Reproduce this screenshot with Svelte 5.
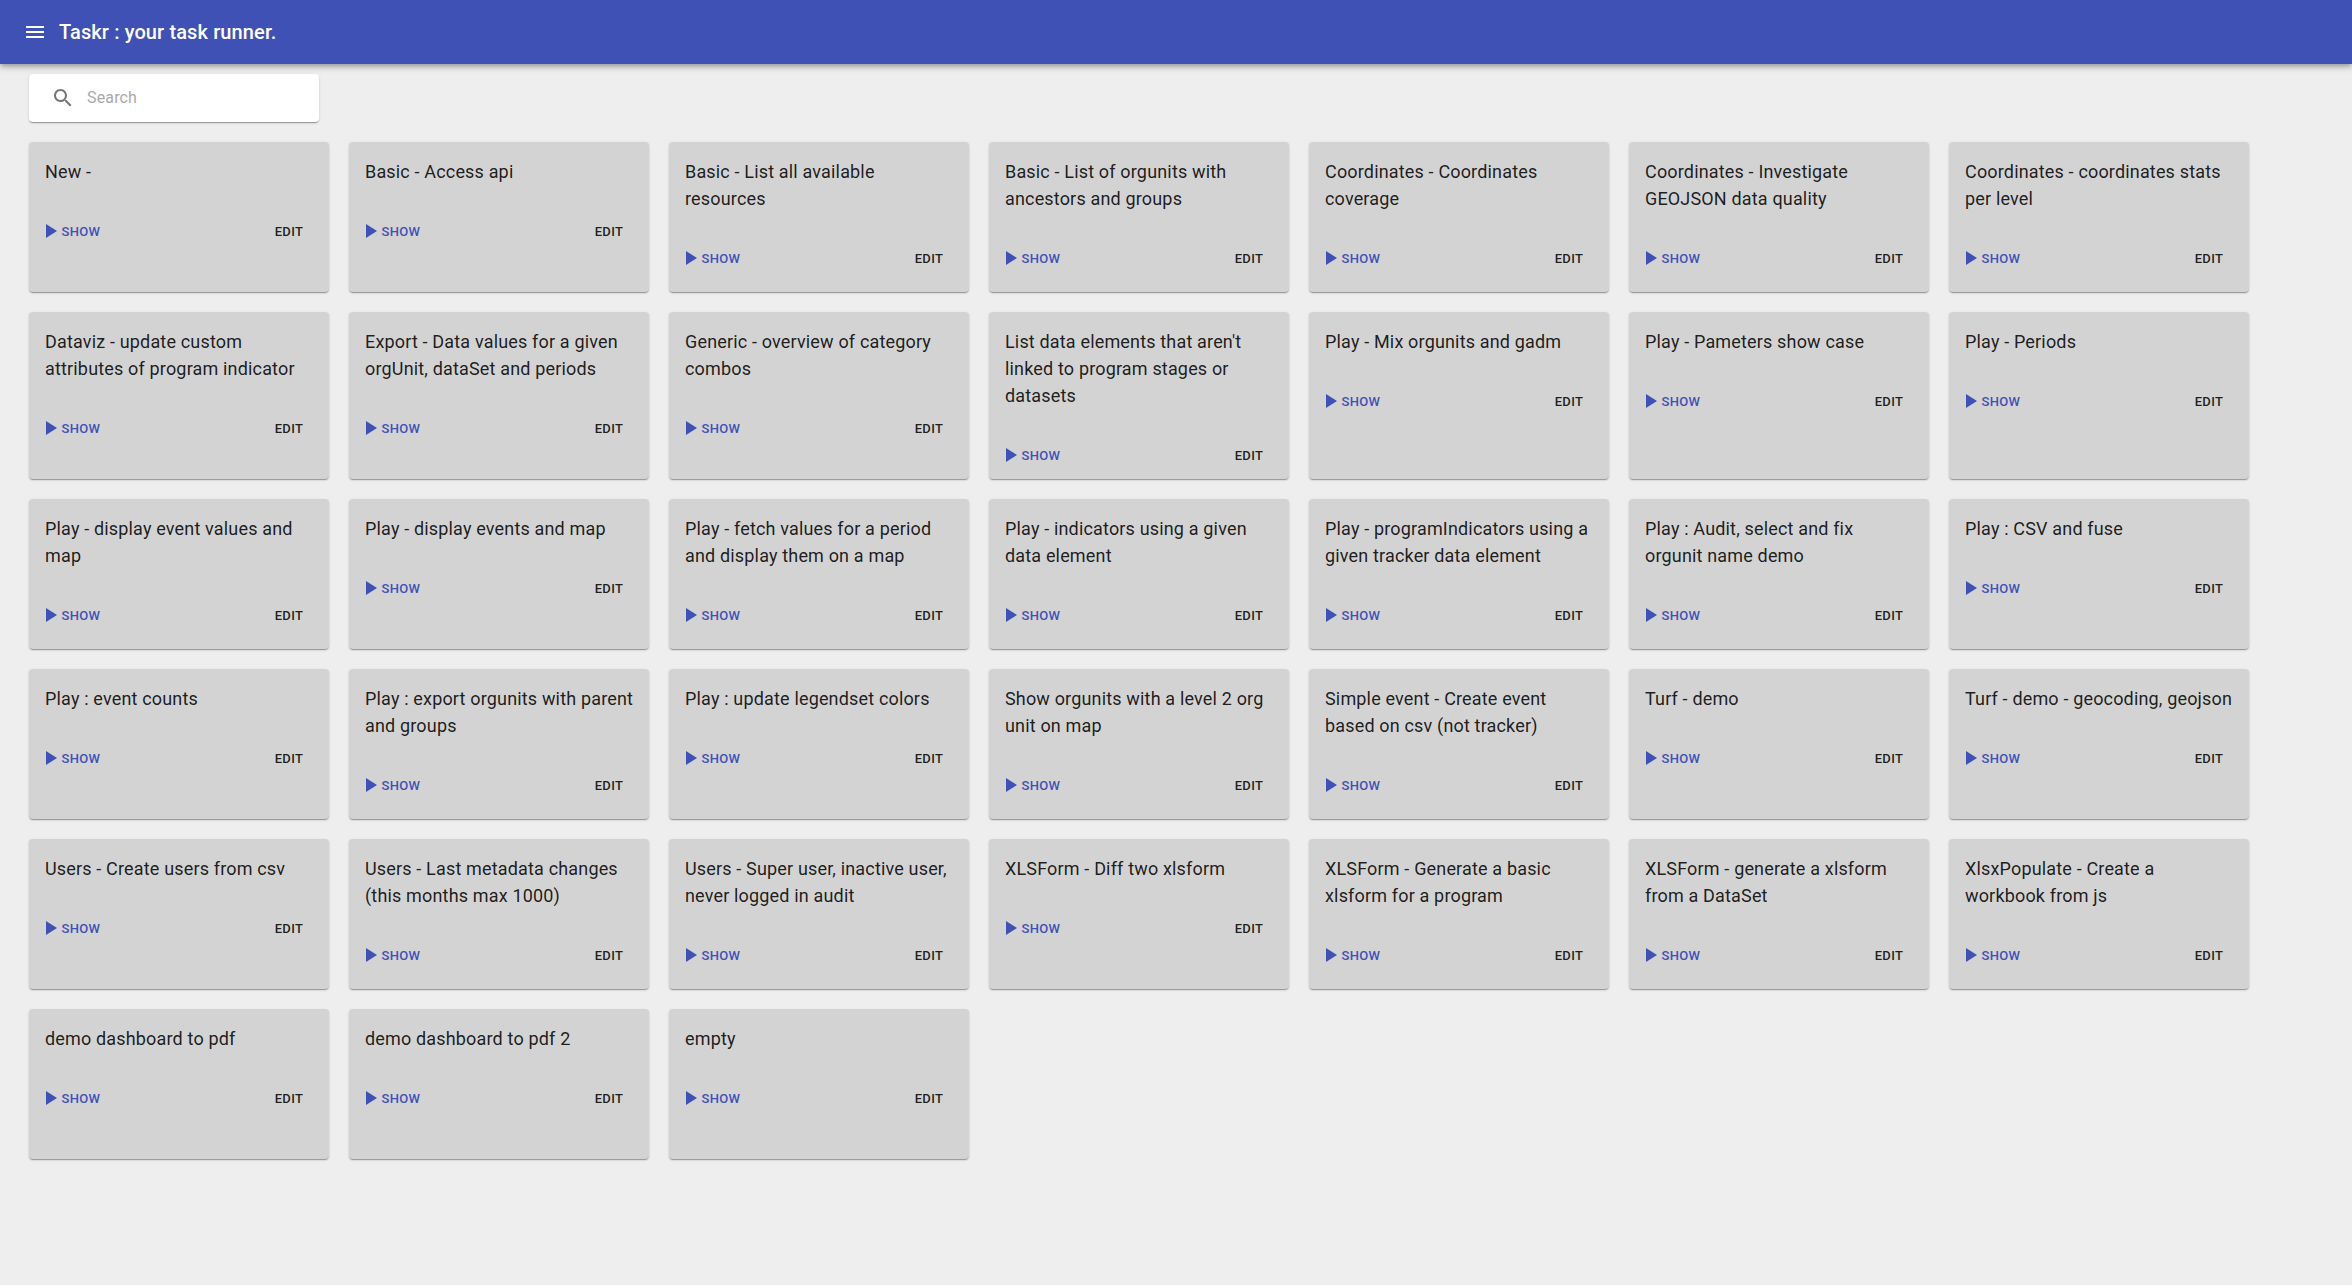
<script>
  const tasks = [
    'New -',
    'Basic - Access api',
    'Basic - List all available resources',
    'Basic - List of orgunits with ancestors and groups',
    'Coordinates - Coordinates coverage',
    'Coordinates - Investigate GEOJSON data quality',
    'Coordinates - coordinates stats per level',
    'Dataviz - update custom attributes of program indicator',
    'Export - Data values for a given orgUnit, dataSet and periods',
    'Generic - overview of category combos',
    "List data elements that aren't linked to program stages or datasets",
    'Play - Mix orgunits and gadm',
    'Play - Pameters show case',
    'Play - Periods',
    'Play - display event values and map',
    'Play - display events and map',
    'Play - fetch values for a period and display them on a map',
    'Play - indicators using a given data element',
    'Play - programIndicators using a given tracker data element',
    'Play : Audit, select and fix orgunit name demo',
    'Play : CSV and fuse',
    'Play : event counts',
    'Play : export orgunits with parent and groups',
    'Play : update legendset colors',
    'Show orgunits with a level 2 org unit on map',
    'Simple event - Create event based on csv (not tracker)',
    'Turf - demo',
    'Turf - demo - geocoding, geojson',
    'Users - Create users from csv',
    'Users - Last metadata changes (this months max 1000)',
    'Users - Super user, inactive user, never logged in audit',
    'XLSForm - Diff two xlsform',
    'XLSForm - Generate a basic xlsform for a program',
    'XLSForm - generate a xlsform from a DataSet',
    'XlsxPopulate - Create a workbook from js',
    'demo dashboard to pdf',
    'demo dashboard to pdf 2',
    'empty',
  ];
</script>

<header class="app-bar">
  <svg class="icon" viewBox="0 0 24 24"><path d="M3 18h18v-2H3v2zm0-5h18v-2H3v2zm0-7v2h18V6H3z" /></svg>
  <h1>Taskr : your task runner.</h1>
</header>

<main>
  <div class="search">
    <svg class="icon" viewBox="0 0 24 24">
      <path d="M15.5 14h-.79l-.28-.27C15.41 12.59 16 11.11 16 9.5 16 5.91 13.09 3 9.5 3S3 5.91 3 9.5 5.91 16 9.5 16c1.61 0 3.09-.59 4.23-1.57l.27.28v.79l5 4.99L20.49 19l-4.99-5zm-6 0C7.01 14 5 11.99 5 9.5S7.01 5 9.5 5 14 7.01 14 9.5 11.99 14 9.5 14z" />
    </svg>
    <input type="text" placeholder="Search" aria-label="Search" />
  </div>

  <div class="grid">
    {#each tasks as task}
      <article class="card">
        <h2>{task}</h2>
        <div class="actions">
          <button class="show">
            <svg class="icon" viewBox="0 0 24 24"><path d="M8 5v14l11-7z" /></svg>Show
          </button>
          <button class="edit">Edit</button>
        </div>
      </article>
    {/each}
  </div>
</main>

<style>
  :global(body) {
    background: #eee;
    font-family: Roboto, 'Liberation Sans', sans-serif;
    color: rgba(0, 0, 0, 0.87);
  }

  .icon {
    width: 24px;
    height: 24px;
    flex: none;
    fill: currentColor;
  }

  .app-bar {
    display: flex;
    align-items: center;
    gap: 12px;
    box-sizing: border-box;
    height: 64px;
    padding: 0 23px;
    background: #3f51b5;
    color: #fff;
    box-shadow:
      0 2px 4px -1px rgba(0, 0, 0, 0.2),
      0 4px 5px 0 rgba(0, 0, 0, 0.14),
      0 1px 10px 0 rgba(0, 0, 0, 0.12);
  }

  h1 {
    margin: 0;
    font-size: 20px;
    font-weight: 500;
    line-height: 32px;
    letter-spacing: 0.12px;
  }

  main {
    padding: 10px 29px;
  }

  .search,
  .card {
    border-radius: 4px;
    box-shadow:
      0 2px 1px -1px rgba(0, 0, 0, 0.2),
      0 1px 1px 0 rgba(0, 0, 0, 0.14),
      0 1px 3px 0 rgba(0, 0, 0, 0.12);
  }

  .search {
    display: flex;
    align-items: center;
    gap: 12px;
    box-sizing: border-box;
    width: 290px;
    height: 48px;
    padding: 0 22px;
    background: #fff;
  }

  .search .icon {
    color: rgba(0, 0, 0, 0.54);
  }

  input {
    flex: 1;
    min-width: 0;
    padding: 0 0 2px;
    border: 0;
    outline: 0;
    background: none;
    font: 400 16px/19px Roboto, 'Liberation Sans', sans-serif;
    letter-spacing: 0.00938em;
  }

  input::placeholder {
    color: #a9a9a9;
    opacity: 1;
  }

  .grid {
    display: grid;
    grid-template-columns: repeat(7, 300px);
    grid-auto-rows: minmax(150px, auto);
    gap: 20px;
    padding-top: 20px;
  }

  .card {
    box-sizing: border-box;
    padding: 16px 8px 8px;
    background: #d3d3d3;
  }

  h2 {
    margin: 0 7px 31px 8px;
    font-size: 18px;
    font-weight: 400;
    line-height: 27px;
    letter-spacing: 0.165px;
  }

  .actions {
    display: flex;
    align-items: center;
    justify-content: space-between;
  }

  button {
    display: flex;
    align-items: center;
    justify-content: center;
    box-sizing: border-box;
    min-width: 64px;
    height: 31px;
    padding: 4px 5px;
    border: 0;
    background: none;
    color: inherit;
    font: 500 13px/23px Roboto, 'Liberation Sans', sans-serif;
    letter-spacing: 0.35px;
    text-transform: uppercase;
  }

  .show {
    justify-content: flex-start;
    padding-left: 1px;
    color: #3f51b5;
  }

  .show .icon {
    align-self: flex-start;
    margin: -1px -0.6px 0 0;
  }
</style>
